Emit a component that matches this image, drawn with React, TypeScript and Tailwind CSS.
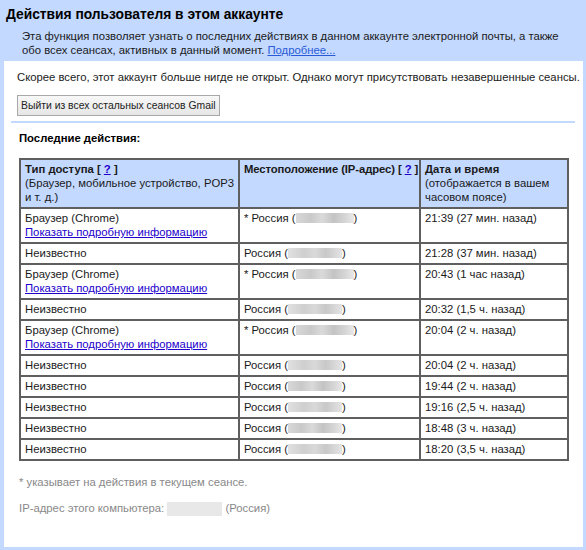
import React from "react";

const Blur = ({ w = 56, v = 0 }: { w?: number; v?: number }) => {
  const grads = [
    "bg-[linear-gradient(90deg,#d8d8d8_0%,#c9c9c9_25%,#dadada_45%,#c3c3c3_65%,#d6d6d6_85%,#e8e8e8_100%)]",
    "bg-[linear-gradient(90deg,#e0e0e0_0%,#cfcfcf_30%,#d9d9d9_50%,#c8c8c8_70%,#e4e4e4_100%)]",
  ];
  return (
    <span
      className={`inline-block h-[10px] align-[-1px] ${grads[v % 2]}`}
      style={{ width: w }}
    />
  );
};

type Row = { browser: boolean; current: boolean; time: string };

const rows: Row[] = [
  { browser: true, current: true, time: "21:39 (27 мин. назад)" },
  { browser: false, current: false, time: "21:28 (37 мин. назад)" },
  { browser: true, current: true, time: "20:43 (1 час назад)" },
  { browser: false, current: false, time: "20:32 (1,5 ч. назад)" },
  { browser: true, current: true, time: "20:04 (2 ч. назад)" },
  { browser: false, current: false, time: "20:04 (2 ч. назад)" },
  { browser: false, current: false, time: "19:44 (2 ч. назад)" },
  { browser: false, current: false, time: "19:16 (2,5 ч. назад)" },
  { browser: false, current: false, time: "18:48 (3 ч. назад)" },
  { browser: false, current: false, time: "18:20 (3,5 ч. назад)" },
];

const cell = "border-2 border-[#5f5f5f] align-top pl-[4px] pr-[2px] pt-[2px] pb-[3px]";

export default function App() {
  return (
    <div className="w-[586px] h-[550px] bg-[#c3d9ff] font-['Liberation_Sans',Arial,sans-serif] text-[11.3px] text-[#1a1a1a] flex flex-col overflow-hidden">
      <div className="pt-[5px] px-[6px]">
        <h1 className="text-[13.8px] font-bold leading-[19px] text-black">
          Действия пользователя в этом аккаунте
        </h1>
        <p className="mt-[5px] pl-[16px] leading-[14px] whitespace-nowrap">
          Эта функция позволяет узнать о последних действиях в данном аккаунте электронной почты, а также
          <br />
          обо всех сеансах, активных в данный момент.{" "}
          <a className="text-[#2a5bd7] underline" href="#">
            Подробнее...
          </a>
        </p>
      </div>
      <div className="mt-[4px] ml-[4px] mr-[3px] mb-[3px] flex-1 bg-white flex flex-col">
        <div className="pt-[9px] pl-[13px] leading-[15px]">
          Скорее всего, этот аккаунт больше нигде не открыт. Однако могут присутствовать незавершенные сеансы.
        </div>
        <div className="pl-[13px] mt-[10px]">
          <button className="h-[21px] px-[3px] border border-[#a8a8a8] bg-[linear-gradient(#f8f8f8,#e6e6e6)] text-[10.4px] text-[#222] leading-[15px]">
            Выйти из всех остальных сеансов Gmail
          </button>
        </div>
        <div className="mt-[5px] ml-[7px] mr-[8px] h-[2px] bg-[#c3d9ff]" />
        <div className="mt-[8px] pl-[15px] font-bold leading-[15px] text-black">Последние действия:</div>
        <div className="mt-[12px] pl-[15px]">
          <table className="border-collapse border-2 border-[#5f5f5f] w-[548px] leading-[14px] table-fixed">
            <colgroup>
              <col className="w-[219px]" />
              <col className="w-[181px]" />
              <col className="w-[148px]" />
            </colgroup>
            <thead>
              <tr className="bg-[#c3d9ff]">
                <th className={`${cell} text-left font-normal`}>
                  <span className="font-bold">
                    Тип доступа [{" "}
                    <a className="text-[#2200cc] underline" href="#">
                      ?
                    </a>{" "}
                    ]
                  </span>
                  <br />
                  (Браузер, мобильное устройство, POP3 и т. д.)
                </th>
                <th className={`${cell} text-left font-normal`}>
                  <span className="font-bold whitespace-nowrap tracking-[-0.1px]">
                    Местоположение (IP-адрес) [{" "}
                    <a className="text-[#2200cc] underline" href="#">
                      ?
                    </a>{" "}
                    ]
                  </span>
                </th>
                <th className={`${cell} text-left font-normal`}>
                  <span className="font-bold">Дата и время</span>
                  <br />
                  (отображается в вашем часовом поясе)
                </th>
              </tr>
            </thead>
            <tbody>
              {rows.map((r, i) => (
                <tr key={i}>
                  <td className={cell}>
                    {r.browser ? (
                      <>
                        Браузер (Chrome)
                        <br />
                        <a className="text-[#2200cc] underline" href="#">
                          Показать подробную информацию
                        </a>
                      </>
                    ) : (
                      "Неизвестно"
                    )}
                  </td>
                  <td className={cell}>
                    {r.current ? "* " : ""}Россия (<Blur w={r.current ? 58 : 54} v={i} />)
                  </td>
                  <td className={cell}>{r.time}</td>
                </tr>
              ))}
            </tbody>
          </table>
        </div>
        <div className="mt-[14px] pl-[15px] text-[#888] leading-[15px]">
          * указывает на действия в текущем сеансе.
        </div>
        <div className="mt-[11px] pl-[15px] text-[#888] leading-[15px] flex items-center">
          IP-адрес этого компьютера:&nbsp;
          <span className="inline-block w-[55px] h-[14px] bg-[#e8e8e8]" />
          &nbsp;(Россия)
        </div>
      </div>
    </div>
  );
}
